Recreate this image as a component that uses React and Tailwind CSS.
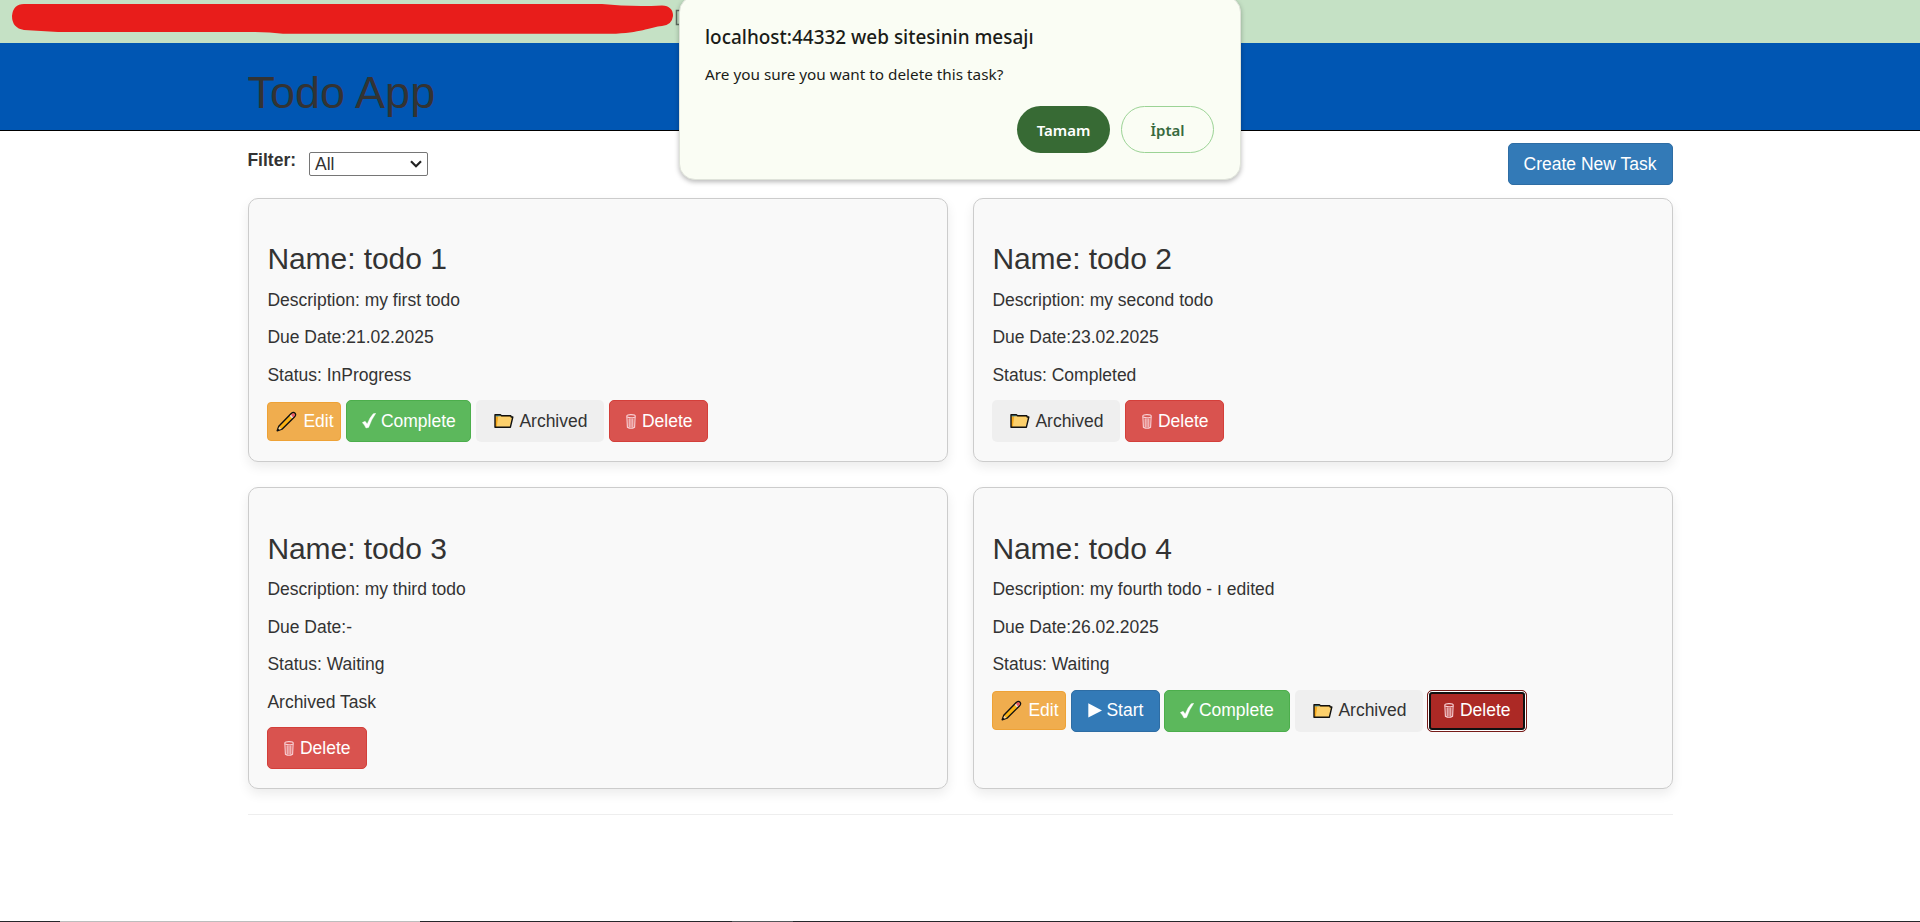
const TEXT = "font-['Liberation_Sans',Arial,sans-serif]";
const UI = "font-['Noto_Sans',sans-serif]";

function Pencil() {
  return (
    <svg className="block shrink-0" width="21" height="21" viewBox="0 0 21 21">
      <path d="M1.200 19.800 L2.800 15.200 L15.200 2.600 Q17.400 0.600 19 2.200 Q20.400 3.900 18.400 6 L6 18.200 Z" fill="#fbb314" stroke="#111" strokeWidth="1.4" strokeLinejoin="round" />
      <path d="M15 3.800 L16.200 2.700 Q17.500 1.800 18.500 2.800 Q19.300 3.900 18.200 5.200 L17 6.400 Z" fill="#e8536d" />
      <path d="M13.800 5 L15 3.800 L17 6.400 L15.900 7.300 Z" fill="#e3dfe0" />
      <path d="M1.900 19.100 L3.200 15.700 L5.500 17.900 Z" fill="#f6d5a5" />
      <path d="M1.200 19.800 L2 17.400 L3.600 19 Z" fill="#111" />
    </svg>
  );
}

function Check() {
  return (
    <svg className="block shrink-0" width="14" height="16" viewBox="0 0 14 16">
      <path d="M0.3 9.6 L3.1 8.2 L5.2 11 Q7.6 4.6 11.2 0.8 L13.8 0.3 Q9.4 6.4 6.6 14.4 L4 15 Q2.4 11.6 0.3 9.6 Z" fill="#fff" stroke="#fff" strokeWidth="0.4" />
    </svg>
  );
}

function Folder() {
  return (
    <svg className="block shrink-0" width="20" height="16" viewBox="0 0 20 16">
      <path d="M1 14.200 V1.700 H6.400 L7.600 2.800 H16.600 V5 L15.800 14.200 Z" fill="#f5a81c" />
      <path d="M1.800 2 H6 L7.200 3.600 H1.800 Z" fill="#4d9fb0" />
      <path d="M4.200 3.600 H18.600 L16.200 14 H2.800 Z" fill="#fcd06c" />
      <path d="M1 14.200 V1.700 H6.400 L7.600 2.800 H16.800 L17.200 4 H18.800 L16.400 14.200 Z" fill="none" stroke="#111" strokeWidth="1.4" strokeLinejoin="round" />
    </svg>
  );
}

function Bin() {
  return (
    <svg className="block shrink-0" width="10" height="15" viewBox="0 0 10 15" fill="none" stroke="#f8d3d8" strokeWidth="1.1">
      <ellipse cx="5" cy="2.2" rx="4.3" ry="1.6" />
      <path d="M0.9 3 L1.4 13.2 Q5 15.4 8.6 13.2 L9.1 3" />
      <path d="M3.2 4.4 V13.4 M5 4.4 V13.6 M6.800 4.4 V13.4" />
    </svg>
  );
}

function Play() {
  return (
    <svg className="block shrink-0" width="14" height="15" viewBox="0 0 14 15">
      <path d="M0.300 0.200 L14 7.400 L0.300 14.600 Z" fill="#fff" />
    </svg>
  );
}

function EditButton() {
  return (
    <button className="flex h-[39px] w-[74px] items-center rounded-[4px] border border-[#eea236] bg-[#f0ad4e] pl-2 text-white">
      <Pencil />
      <span className="ml-[6px]">Edit</span>
    </button>
  );
}

function StartButton() {
  return (
    <button className="-mr-px flex h-[42px] w-[89px] items-center rounded-[5px] border border-[#2e6da4] bg-[#337ab7] pl-4 text-white">
      <Play />
      <span className="ml-[4px]">Start</span>
    </button>
  );
}

function CompleteButton({ wide }) {
  return (
    <button className={`flex h-[42px] items-center rounded-[5px] border border-[#4cae4c] bg-[#5cb85c] pl-[15px] text-white ${wide ? "w-[126px]" : "w-[125px]"}`}>
      <Check />
      <span className="ml-[4.5px]">Complete</span>
    </button>
  );
}

function ArchiveButton() {
  return (
    <button className="flex h-[42px] w-[128px] items-center rounded-[5px] bg-[#efefef] pl-[18px]">
      <Folder />
      <span className="ml-[5px]">Archived</span>
    </button>
  );
}

function DeleteButton({ focused, wide }) {
  return (
    <button
      className={
        focused
          ? "-ml-px flex h-[42px] w-[100px] items-center rounded-[5px] border border-[#761c19] bg-[#ac2925] pl-4 text-white shadow-[inset_0_0_0_1px_#fff,inset_0_0_0_3px_#101010]"
          : `flex h-[42px] items-center rounded-[5px] border border-[#d43f3a] bg-[#d9534f] pl-4 text-white ${wide ? "w-[100px]" : "w-[99px]"}`
      }
    >
      <Bin />
      <span className="ml-[5.5px]">Delete</span>
    </button>
  );
}

function Card({ title, lines, children }) {
  return (
    <div className="rounded-[10px] border border-[#ccc] bg-[#f9f9f9] px-[18.4px] pt-[43.5px] pb-[19px] shadow-[0_5px_12px_rgba(0,0,0,0.08)]">
      <h3 className="text-[30px] leading-[33px] tracking-[-0.06px]">{title}</h3>
      <div className="mt-[12.5px] flex flex-col gap-[12.5px]">
        {lines.map((line) => (
          <p key={line} className="leading-[25px]">{line}</p>
        ))}
      </div>
      <div className="mt-[12.5px] flex items-center gap-[5px]">{children}</div>
    </div>
  );
}

function Dialog() {
  return (
    <div className={`absolute top-[-4px] left-[679px] h-[184px] w-[562px] rounded-[16px] border border-[#dfe3da] bg-[#fafdf4] pr-[26px] pl-[25px] text-[#1a1c18] shadow-[0_2px_5px_rgba(0,0,0,0.28)] ${UI}`}>
      <h2 className="mt-[26px] text-[18.95px] leading-[28px] font-medium whitespace-nowrap">localhost:44332 web sitesinin mesajı</h2>
      <p className="mt-[12px] text-[15.3px] leading-[22px] whitespace-nowrap">Are you sure you want to delete this task?</p>
      <div className="mt-[21px] flex justify-end gap-[11px] text-[15px] font-semibold">
        <button className="h-[47px] w-[93px] rounded-full bg-[#376a34] pt-px text-white">Tamam</button>
        <button className="h-[47px] w-[93px] rounded-full border border-[#9bd395] pt-px text-[#376a3e]">İptal</button>
      </div>
    </div>
  );
}

export default function App() {
  return (
    <div className={`relative flex h-[922px] w-[1920px] flex-col overflow-hidden bg-white text-[17.5px] text-[#333] ${TEXT}`}>
      <div className="h-[43px] shrink-0 bg-[#c5e1c5]">
        <svg className="block" width="700" height="43" viewBox="0 0 700 43">
          <path d="M683 10.500 H676.500 V24.500 H683" fill="none" stroke="#5e6b60" strokeWidth="1.5" />
          <path d="M24 4 H602 Q630 7 662 5.500 Q673 6 673 16 Q672 25 662 26 C650 27 645 32 616 33.700 H283 Q270 32 255 32 H58 L24 30 Q12 28 12 16 Q13 4 24 4 Z" fill="#e81d1b" />
        </svg>
      </div>
      <header className="h-[88px] shrink-0 border-b border-black bg-[#0056b3] pl-[247.5px]">
        <h1 className="pt-[25px] text-[45px] leading-[50px]">Todo App</h1>
      </header>
      <main className="ml-[248px] w-[1425px]">
        <div className="flex items-start justify-between pt-[12px]">
          <div className="-ml-[0.6px] flex">
            <label className="pt-[5px] leading-[25px] font-bold">Filter:</label>
            <div className="mt-[9px] ml-[13px] flex h-[24px] w-[119px] items-center justify-between rounded-[2px] border border-[#767676] bg-white pr-[5px] pl-[5px]">
              <span>All</span>
              <svg width="12" height="8" viewBox="0 0 12 8">
                <path d="M1 1.200 L6 6.200 L11 1.200" fill="none" stroke="#222" strokeWidth="2.200" />
              </svg>
            </div>
          </div>
          <button className="h-[42px] w-[165px] rounded-[5px] border border-[#2e6da4] bg-[#337ab7] pr-px text-white">Create New Task</button>
        </div>
        <div className="mt-[12.75px] grid grid-cols-2 grid-rows-[264px_302px] gap-x-[25px] gap-y-[25.25px]">
          <Card title="Name: todo 1" lines={["Description: my first todo", "Due Date:21.02.2025", "Status: InProgress"]}>
            <EditButton />
            <CompleteButton />
            <ArchiveButton />
            <DeleteButton />
          </Card>
          <Card title="Name: todo 2" lines={["Description: my second todo", "Due Date:23.02.2025", "Status: Completed"]}>
            <ArchiveButton />
            <DeleteButton />
          </Card>
          <Card title="Name: todo 3" lines={["Description: my third todo", "Due Date:-", "Status: Waiting", "Archived Task"]}>
            <DeleteButton wide />
          </Card>
          <Card title="Name: todo 4" lines={["Description: my fourth todo - ı edited", "Due Date:26.02.2025", "Status: Waiting"]}>
            <EditButton />
            <StartButton />
            <CompleteButton wide />
            <ArchiveButton />
            <DeleteButton focused />
          </Card>
        </div>
        <hr className="mt-[25px] border-[#eee]" />
      </main>
      <div className="mt-auto flex h-px shrink-0 bg-[#26272b]">
        <div className="ml-[60px] w-[360px] bg-[#bdbdbd]" />
        <div className="ml-[312px] w-[61px] bg-[#55565a]" />
      </div>
      <Dialog />
    </div>
  );
}
